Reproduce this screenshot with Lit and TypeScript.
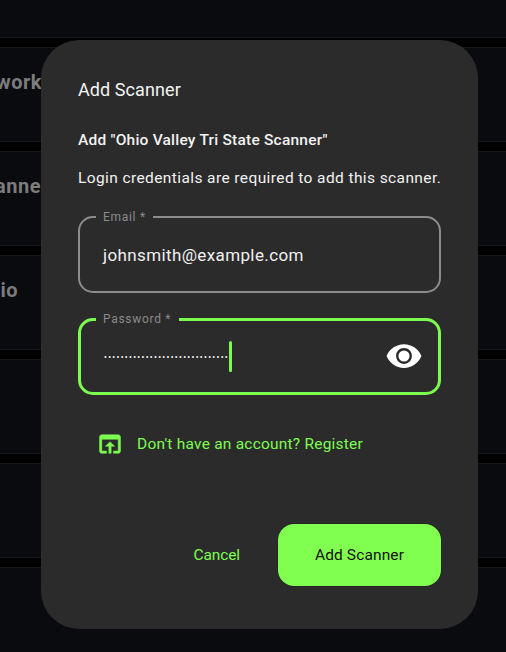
import { LitElement, html, css } from "lit";
import { customElement } from "lit/decorators.js";

const ROWS = [
  { text: "work", end: 42 },
  { text: "anne", end: 41 },
  { text: "io", end: 18 },
  { text: "", end: 0 },
  { text: "", end: 0 },
  { text: "", end: 0 },
];

@customElement("app-root")
export class AppRoot extends LitElement {
  static styles = css`
    :host {
      display: block;
      position: relative;
      width: 506px;
      height: 652px;
      overflow: hidden;
      background: #000;
      font-family: Roboto, "Liberation Sans", sans-serif;
      color: #f2f2f2;
    }
    .list { display: flex; flex-direction: column; gap: 9px; height: 652px; }
    .top { height: 38px; background: #0a0b0f; border-bottom: 1px solid #15161a; box-sizing: border-box; flex: none; }
    .row {
      height: 95px;
      flex: none;
      box-sizing: border-box;
      background: #0a0b0f;
      border-top: 1px solid #15161a;
      border-bottom: 1px solid #15161a;
      padding-top: 19px;
      display: flex;
      justify-content: flex-end;
      align-items: flex-start;
    }
    .row span {
      font-size: 20px;
      line-height: 30px;
      font-weight: 700;
      letter-spacing: 0.5px;
      color: #7c7c7c;
      white-space: nowrap;
    }
    .scrim {
      position: absolute;
      inset: 0;
      display: flex;
      align-items: flex-start;
      padding: 40px 0 0 41px;
    }
    .dialog {
      width: 437px;
      height: 589px;
      box-sizing: border-box;
      background: #2b2b2b;
      border-radius: 38px;
      padding: 37px 37px 0;
      display: flex;
      flex-direction: column;
    }
    .title { font-size: 18px; line-height: 26px; letter-spacing: 0.08px; color: #f4f4f4; }
    .sub { margin-top: 26px; font-size: 15.5px; line-height: 22px; font-weight: 500; letter-spacing: 0.22px; }
    .desc { margin-top: 16px; font-size: 15.5px; line-height: 22px; letter-spacing: 0.4px; white-space: nowrap; }
    fieldset {
      margin: 0;
      padding: 0 16px 0 22px;
      box-sizing: border-box;
      height: 83px;
      min-width: 0;
      border: 2px solid #8c8c8c;
      border-radius: 15px;
    }
    legend {
      margin-left: -6px;
      padding: 1px 7px 0;
      font-size: 12px;
      line-height: 13px;
      letter-spacing: 0.7px;
      color: #8a8a8a;
    }
    .inner { display: flex; align-items: center; height: 62px; }
    .email { margin-top: 21px; }
    .pw { margin-top: 19px; border: 3px solid #7dfc50; padding-left: 21px; padding-right: 15px; }
    .pw legend { margin-left: -6px; padding-right: 8px; }
    .pw .inner { height: 60px; }
    .value { margin-left: 1px; font-size: 17px; line-height: 24px; letter-spacing: 0.38px; color: #f0f0f0; }
    .dots {
      margin-left: 2px;
      padding-top: 1px;
      font-size: 8.5px;
      line-height: 30px;
      letter-spacing: 1.3px;
      color: #fff;
      white-space: nowrap;
    }
    .caret { width: 3px; height: 31px; background: #7dfc50; border-radius: 2px; flex: none; }
    .eye { margin-left: auto; width: 38px; height: 38px; fill: #fff; flex: none; display: block; }
    .reg {
      margin-top: 35px;
      margin-left: 18px;
      display: flex;
      align-items: center;
      gap: 13px;
      color: #7dfc50;
      font-size: 15.5px;
      line-height: 28px;
      letter-spacing: 0.22px;
    }
    .reg svg { width: 28px; height: 28px; fill: #7dfc50; stroke: #7dfc50; stroke-width: 0.4; display: block; flex: none; }
    .actions {
      margin-top: 66px;
      display: flex;
      justify-content: flex-end;
      align-items: center;
      gap: 38px;
    }
    .cancel { color: #7dfc50; font-size: 15.5px; letter-spacing: -0.1px; }
    .add {
      width: 163px;
      height: 62px;
      background: #80ff50;
      border-radius: 16px;
      box-shadow: 0 0 1px #000;
      color: #111;
      font-size: 15.5px;
      letter-spacing: 0.13px;
      display: flex;
      align-items: center;
      justify-content: center;
    }
  `;

  render() {
    return html`
      <div class="list">
        <div class="top"></div>
        ${ROWS.map(
          (r) => html`<div class="row" style="padding-right:${506 - r.end}px"><span>${r.text}</span></div>`
        )}
      </div>
      <div class="scrim">
        <div class="dialog">
          <div class="title">Add Scanner</div>
          <div class="sub">Add "Ohio Valley Tri State Scanner"</div>
          <div class="desc">Login credentials are required to add this scanner.</div>
          <fieldset class="email">
            <legend>Email *</legend>
            <div class="inner"><span class="value">johnsmith@example.com</span></div>
          </fieldset>
          <fieldset class="pw">
            <legend>Password *</legend>
            <div class="inner">
              <span class="dots">${"•".repeat(30)}</span>
              <span class="caret"></span>
              <svg class="eye" viewBox="0 0 24 24"><path fill-rule="evenodd" d="M12 4.5C7 4.5 2.73 7.61 1 12c1.73 4.39 6 7.5 11 7.5s9.27-3.11 11-7.5c-1.73-4.39-6-7.5-11-7.5zM12 17c-2.76 0-5-2.24-5-5s2.24-5 5-5 5 2.24 5 5-2.24 5-5 5z"/><circle cx="12" cy="12" r="3.5"/></svg>
            </div>
          </fieldset>
          <div class="reg">
            <svg viewBox="0 0 24 24"><path d="M19 4H5c-1.11 0-2 .9-2 2v12c0 1.1.89 2 2 2h4v-2H5V8h14v10h-4v2h4c1.1 0 2-.9 2-2V6c0-1.1-.89-2-2-2zm-7 6l-4 4h3v6h2v-6h3l-4-4z"/></svg>
            <span>Don't have an account? Register</span>
          </div>
          <div class="actions">
            <span class="cancel">Cancel</span>
            <div class="add">Add Scanner</div>
          </div>
        </div>
      </div>
    `;
  }
}
